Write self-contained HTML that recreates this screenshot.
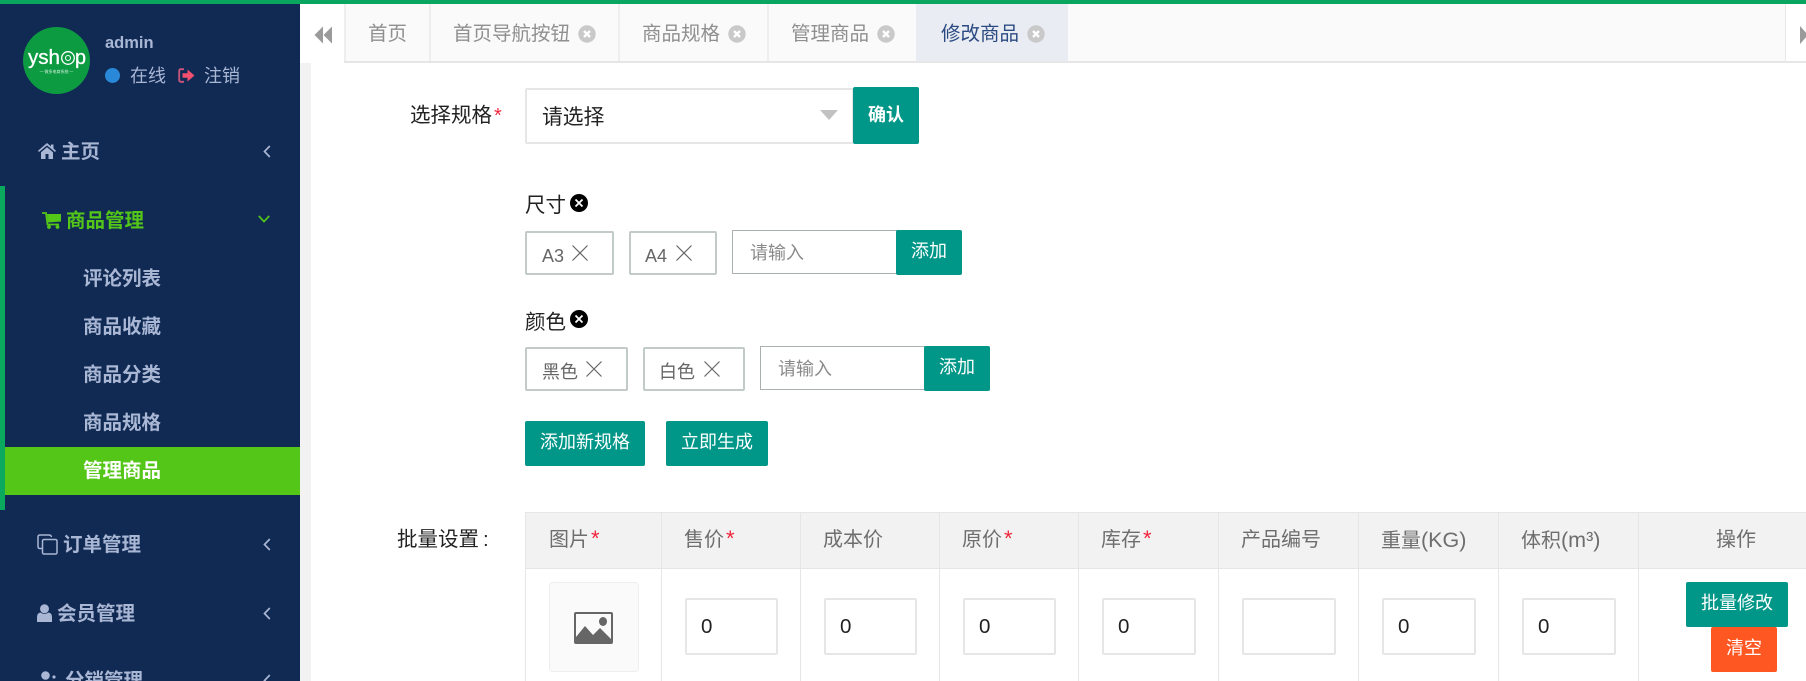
<!DOCTYPE html>
<html><head><meta charset="utf-8"><style>
html,body{margin:0;padding:0;background:#fff;width:1806px;height:681px;overflow:hidden}
body{position:relative;font-family:"Liberation Sans","Noto Sans CJK SC",sans-serif;color:#222}
.a,.t{position:absolute;box-sizing:border-box}
.t{white-space:nowrap;line-height:30px;height:30px}
.n{font-size:19.500px;font-weight:700;color:#a9b6d4}
.tab{font-size:19.500px;color:#8f8f8f}
.b{position:absolute;box-sizing:border-box;background:#009688;color:#fff;font-size:18px;text-align:center;border-radius:2px}
.tag{position:absolute;box-sizing:border-box;border:2px solid #c3caca;border-radius:2px;height:44px;background:#fff}
.tg{font-size:18px;color:#666}
.inp{position:absolute;box-sizing:border-box;border:1px solid #aab0b0;border-right:0;height:44px;background:#fff}
.ph{font-size:18px;color:#8a8a8a}
.h{font-size:20px;color:#6e6e6e}
.h i{font-style:normal;font-size:21.500px}
.r{color:#f0263c;font-size:22px;line-height:20px;margin-left:2px}
.ci{position:absolute;box-sizing:border-box;border:2px solid #e6e6e6;border-radius:2px;background:#fff;width:93px;height:57px;top:598px;font-size:20.500px;line-height:53px;padding-left:14px;color:#222}
.v{position:absolute;width:1px;background:#e6e6e6;top:512px;height:169px}
svg{position:absolute;overflow:visible}
</style></head><body>
<!-- main bg -->
<div class="a" style="left:300px;top:0;width:11px;height:681px;background:#f2f2f2"></div>
<!-- tabs -->
<div class="a" style="left:300px;top:4px;width:1506px;height:59px;background:#fafafa;border-bottom:2px solid #e6e6e6"></div>
<div class="a" style="left:300px;top:4px;width:44px;height:59px;background:#fff"></div>
<div class="a" style="left:1785px;top:4px;width:21px;height:59px;background:#fff;border-left:1px solid #e8e8e8;border-bottom:2px solid #e6e6e6"></div>
<div class="a" style="left:344px;top:4px;width:2px;height:57px;background:#eee"></div>
<div class="a" style="left:429px;top:4px;width:2px;height:57px;background:#eee"></div>
<div class="a" style="left:618px;top:4px;width:2px;height:57px;background:#eee"></div>
<div class="a" style="left:767px;top:4px;width:2px;height:57px;background:#eee"></div>
<div class="a" style="left:916px;top:4px;width:152px;height:57px;background:#e9edf3"></div>
<svg style="left:314px;top:26px" width="18" height="18" viewBox="0 0 18 18"><path d="M9 0.500V17.500L0.500 9zM18 0.500V17.500L9.500 9z" fill="#9a9a9a"/></svg>
<svg style="left:1800px;top:26px" width="8" height="18" viewBox="0 0 8 18"><path d="M0 0L8 9L0 18z" fill="#9a9a9a"/></svg>
<div class="t tab" style="left:368px;top:19px">首页</div>
<div class="t tab" style="left:453px;top:19px">首页导航按钮</div>
<div class="t tab" style="left:642px;top:19px">商品规格</div>
<div class="t tab" style="left:791px;top:19px">管理商品</div>
<div class="t tab" style="left:941px;top:19px;color:#2c4a82">修改商品</div>
<svg style="left:578px;top:25px" width="18" height="18" viewBox="0 0 18 18"><circle cx="9" cy="9" r="8.700" fill="#c9c9c9"/><path d="M6 6L12 12M12 6L6 12" stroke="#fff" stroke-width="2.400"/></svg>
<svg style="left:728px;top:25px" width="18" height="18" viewBox="0 0 18 18"><circle cx="9" cy="9" r="8.700" fill="#c9c9c9"/><path d="M6 6L12 12M12 6L6 12" stroke="#fff" stroke-width="2.400"/></svg>
<svg style="left:877px;top:25px" width="18" height="18" viewBox="0 0 18 18"><circle cx="9" cy="9" r="8.700" fill="#c9c9c9"/><path d="M6 6L12 12M12 6L6 12" stroke="#fff" stroke-width="2.400"/></svg>
<svg style="left:1027px;top:25px" width="18" height="18" viewBox="0 0 18 18"><circle cx="9" cy="9" r="8.700" fill="#c9c9c9"/><path d="M6 6L12 12M12 6L6 12" stroke="#fff" stroke-width="2.400"/></svg>

<!-- sidebar -->
<div class="a" style="left:0;top:0;width:300px;height:681px;background:#102a54"></div>
<div class="a" style="left:0;top:186px;width:5px;height:324px;background:#0aa95e"></div>
<div class="a" style="left:5px;top:447px;width:295px;height:48px;background:#53c618"></div>
<div class="a" style="left:0;top:0;width:1806px;height:4px;background:#0aa55e"></div>
<!-- logo -->
<svg style="left:23px;top:27px" width="67" height="67" viewBox="0 0 67 67"><circle cx="33.500" cy="33.500" r="33.500" fill="#0d9b42"/>
<text x="5" y="37" font-family="Liberation Sans" font-size="20" fill="#fff" stroke="#fff" stroke-width=".3" textLength="32" lengthAdjust="spacingAndGlyphs">ysh</text><circle cx="45" cy="31" r="6.300" fill="none" stroke="#fff" stroke-width="1.300"/><circle cx="45" cy="31" r="2.500" fill="none" stroke="#fff" stroke-width="1"/><text x="52" y="37" font-family="Liberation Sans" font-size="20" fill="#fff" stroke="#fff" stroke-width=".3" textLength="11" lengthAdjust="spacingAndGlyphs">p</text>
<text x="33.500" y="46" text-anchor="middle" font-family="Noto Sans CJK SC" font-size="4" fill="#cfeed8">一 微多电商系统 一</text></svg>
<div class="t" style="left:105px;top:28px;font-size:16.500px;font-weight:700;color:#a9b6d4">admin</div>
<div class="a" style="left:105px;top:68px;width:15px;height:15px;border-radius:50%;background:#2a88d8"></div>
<div class="t" style="left:130px;top:61px;font-size:18px;color:#a9b6d4">在线</div>
<svg style="left:178px;top:68px" width="17" height="15" viewBox="0 0 17 15"><path d="M6 1.200H3Q1.200 1.200 1.200 3V12Q1.200 13.800 3 13.800H6" fill="none" stroke="#c9577c" stroke-width="1.800"/><path d="M4.500 5.200H9.500V1.500L16.500 7.500L9.500 13.500V9.800H4.500z" fill="#f2506e"/></svg>
<div class="t" style="left:204px;top:61px;font-size:18px;color:#a9b6d4">注销</div>

<svg style="left:38px;top:143px" width="18" height="16" viewBox="0 0 18 16"><path d="M9 0L13 3.400V1.500H15.500V5.500L18 7.700L17 9L9 2.400L1 9L0 7.700z" fill="#a9b6d4"/><path d="M3 9.200L9 4.200L15 9.200V16H10.500V11H7.500V16H3z" fill="#a9b6d4"/></svg>
<div class="t n" style="left:61px;top:137px">主页</div>
<svg style="left:263px;top:145px" width="8" height="13" viewBox="0 0 8 13"><path d="M6.800 1L1.500 6.500L6.800 12" fill="none" stroke="#a9b6d4" stroke-width="1.700"/></svg>

<svg style="left:42px;top:212px" width="19" height="17" viewBox="0 0 19 17"><path d="M0 1H4L5.500 12.500H17" fill="none" stroke="#53c618" stroke-width="1.800"/><path d="M5 2H19V9.500L6 10.500z" fill="#53c618"/><circle cx="7" cy="15" r="1.900" fill="#53c618"/><circle cx="15.500" cy="15" r="1.900" fill="#53c618"/></svg>
<div class="t n" style="left:66px;top:206px;color:#53c618">商品管理</div>
<svg style="left:258px;top:215px" width="12" height="8" viewBox="0 0 12 8"><path d="M0.800 1L6 6.500L11.200 1" fill="none" stroke="#53c618" stroke-width="1.700"/></svg>

<div class="t n" style="left:83px;top:264px">评论列表</div>
<div class="t n" style="left:83px;top:312px">商品收藏</div>
<div class="t n" style="left:83px;top:360px">商品分类</div>
<div class="t n" style="left:83px;top:408px">商品规格</div>
<div class="t n" style="left:83px;top:456px;color:#fff">管理商品</div>

<svg style="left:37px;top:534px" width="21" height="21" viewBox="0 0 21 21"><path d="M5 14.500H3Q1 14.500 1 12.500V3Q1 1 3 1H12Q14 1 14.500 3" fill="none" stroke="#a9b6d4" stroke-width="1.500"/><rect x="5.500" y="5.500" width="14.500" height="14.500" rx="1.500" fill="none" stroke="#a9b6d4" stroke-width="1.500"/></svg>
<div class="t n" style="left:63px;top:530px">订单管理</div>
<svg style="left:263px;top:538px" width="8" height="13" viewBox="0 0 8 13"><path d="M6.800 1L1.500 6.500L6.800 12" fill="none" stroke="#a9b6d4" stroke-width="1.700"/></svg>

<svg style="left:37px;top:604px" width="15" height="18" viewBox="0 0 15 18"><circle cx="7.500" cy="4.800" r="4.500" fill="#a9b6d4"/><path d="M0 18V13Q0 9 3.500 8.500Q7.500 11.500 11.500 8.500Q15 9 15 13V18z" fill="#a9b6d4"/></svg>
<div class="t n" style="left:57px;top:599px">会员管理</div>
<svg style="left:263px;top:607px" width="8" height="13" viewBox="0 0 8 13"><path d="M6.800 1L1.500 6.500L6.800 12" fill="none" stroke="#a9b6d4" stroke-width="1.700"/></svg>

<svg style="left:40px;top:671px" width="16" height="14" viewBox="0 0 16 14"><circle cx="5.500" cy="4.500" r="4.300" fill="#a9b6d4"/><circle cx="14" cy="6" r="1.600" fill="#a9b6d4"/></svg>
<div class="t n" style="left:65px;top:666px">分销管理</div>
<svg style="left:263px;top:674px" width="8" height="13" viewBox="0 0 8 13"><path d="M6.800 1L1.500 6.500L6.800 12" fill="none" stroke="#a9b6d4" stroke-width="1.700"/></svg>

<!-- form: select -->
<div class="t" style="left:410px;top:101px;font-size:20.500px">选择规格<span class="r" style="font-size:20px">*</span></div>
<div class="a" style="left:525px;top:88px;width:329px;height:56px;border:2px solid #e6e6e6;border-radius:2px;background:#fff"></div>
<div class="t" style="left:542px;top:103px;font-size:20.800px">请选择</div>
<svg style="left:820px;top:110px" width="18" height="10" viewBox="0 0 18 10"><path d="M0 0H18L9 10z" fill="#c2c2c2"/></svg>
<div class="b" style="left:853px;top:87px;width:66px;height:57px;line-height:57px;font-weight:700">确认</div>

<!-- spec 1 -->
<div class="t" style="left:525px;top:191px;font-size:20.500px">尺寸</div>
<svg style="left:570px;top:194px" width="18" height="18" viewBox="0 0 18 18"><circle cx="9" cy="9" r="9" fill="#000"/><path d="M5.500 5.500L12.500 12.500M12.500 5.500L5.500 12.500" stroke="#fff" stroke-width="1.800"/></svg>
<div class="tag" style="left:525px;top:231px;width:89px"></div>
<div class="t tg" style="left:542px;top:241px">A3</div>
<svg style="left:572px;top:245px" width="16" height="16" viewBox="0 0 16 16"><path d="M0.500 0.500L15.500 15.500M15.500 0.500L0.500 15.500" stroke="#666" stroke-width="1.200"/></svg>
<div class="tag" style="left:629px;top:231px;width:88px"></div>
<div class="t tg" style="left:645px;top:241px">A4</div>
<svg style="left:676px;top:245px" width="16" height="16" viewBox="0 0 16 16"><path d="M0.500 0.500L15.500 15.500M15.500 0.500L0.500 15.500" stroke="#666" stroke-width="1.200"/></svg>
<div class="inp" style="left:732px;top:230px;width:166px"></div>
<div class="t ph" style="left:750px;top:238px">请输入</div>
<div class="b" style="left:896px;top:230px;width:66px;height:45px;line-height:43px">添加</div>

<!-- spec 2 -->
<div class="t" style="left:525px;top:308px;font-size:20.500px">颜色</div>
<svg style="left:570px;top:310px" width="18" height="18" viewBox="0 0 18 18"><circle cx="9" cy="9" r="9" fill="#000"/><path d="M5.500 5.500L12.500 12.500M12.500 5.500L5.500 12.500" stroke="#fff" stroke-width="1.800"/></svg>
<div class="tag" style="left:525px;top:347px;width:103px"></div>
<div class="t tg" style="left:542px;top:357px">黑色</div>
<svg style="left:586px;top:361px" width="16" height="16" viewBox="0 0 16 16"><path d="M0.500 0.500L15.500 15.500M15.500 0.500L0.500 15.500" stroke="#666" stroke-width="1.200"/></svg>
<div class="tag" style="left:643px;top:347px;width:102px"></div>
<div class="t tg" style="left:659px;top:357px">白色</div>
<svg style="left:704px;top:361px" width="16" height="16" viewBox="0 0 16 16"><path d="M0.500 0.500L15.500 15.500M15.500 0.500L0.500 15.500" stroke="#666" stroke-width="1.200"/></svg>
<div class="inp" style="left:760px;top:346px;width:166px"></div>
<div class="t ph" style="left:778px;top:354px">请输入</div>
<div class="b" style="left:924px;top:346px;width:66px;height:45px;line-height:43px">添加</div>

<div class="b" style="left:525px;top:421px;width:120px;height:45px;line-height:43px">添加新规格</div>
<div class="b" style="left:666px;top:421px;width:102px;height:45px;line-height:43px">立即生成</div>

<!-- table -->
<div class="t" style="left:397px;top:525px;font-size:20.500px">批量设置<span style="margin-left:4px">:</span></div>
<div class="a" style="left:525px;top:512px;width:1281px;height:57px;background:#f2f2f2;border-top:1px solid #e6e6e6;border-bottom:1px solid #e6e6e6"></div>
<div class="v" style="left:525px"></div><div class="v" style="left:661px"></div><div class="v" style="left:800px"></div><div class="v" style="left:939px"></div><div class="v" style="left:1078px"></div><div class="v" style="left:1218px"></div><div class="v" style="left:1358px"></div><div class="v" style="left:1498px"></div><div class="v" style="left:1638px"></div>
<div class="t h" style="left:549px;top:525px">图片<span class="r">*</span></div>
<div class="t h" style="left:684px;top:525px">售价<span class="r">*</span></div>
<div class="t h" style="left:823px;top:525px">成本价</div>
<div class="t h" style="left:962px;top:525px">原价<span class="r">*</span></div>
<div class="t h" style="left:1101px;top:525px">库存<span class="r">*</span></div>
<div class="t h" style="left:1241px;top:525px">产品编号</div>
<div class="t h" style="left:1381px;top:525px">重量<i>(KG)</i></div>
<div class="t h" style="left:1521px;top:525px">体积<i>(m³)</i></div>
<div class="t h" style="left:1716px;top:525px">操作</div>

<div class="a" style="left:549px;top:582px;width:90px;height:90px;background:#fafafa;border:1px solid #eee;border-radius:4px"></div>
<svg style="left:574px;top:612px" width="39" height="32" viewBox="0 0 39 32"><rect x="1" y="1" width="37" height="30" rx="1" fill="#fafafa" stroke="#666" stroke-width="2"/><path d="M2 31V25L11 14L19 23L26 16L37 27V31z" fill="#666"/><ellipse cx="29" cy="9.500" rx="4" ry="4.500" fill="#666"/></svg>

<div class="ci" style="left:685px">0</div>
<div class="ci" style="left:824px">0</div>
<div class="ci" style="left:963px">0</div>
<div class="ci" style="left:1102px;width:94px">0</div>
<div class="ci" style="left:1242px;width:94px"></div>
<div class="ci" style="left:1382px;width:94px">0</div>
<div class="ci" style="left:1522px;width:94px">0</div>

<div class="b" style="left:1686px;top:582px;width:102px;height:45px;line-height:43px">批量修改</div>
<div class="b" style="left:1711px;top:627px;width:66px;height:45px;line-height:43px;background:#ff5722">清空</div>
</body></html>
